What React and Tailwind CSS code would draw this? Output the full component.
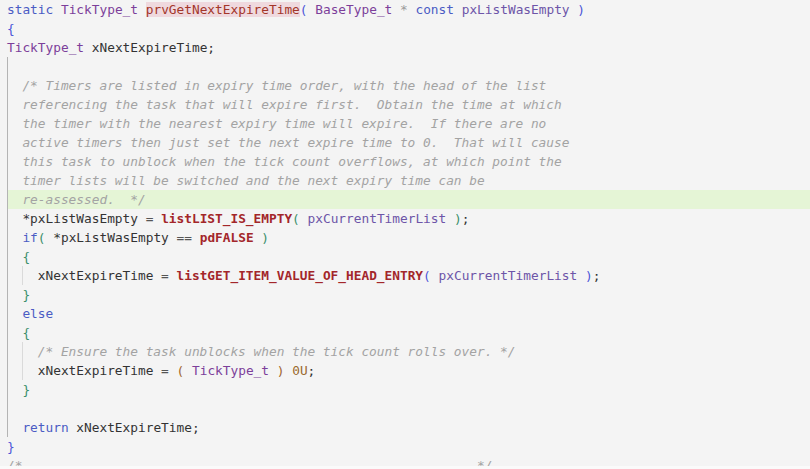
import React from 'react';

// token colours
const C = {
  kw: 'text-[#4b5cc4]',
  type: 'text-[#7c3f9a]',
  mac: 'text-[#a3262a] font-bold',
  param: 'text-[#6d55a8]',
  id: 'text-[#333333]',
  op: 'text-[#555555]',
  dim: 'text-[#9a9a9a]',
  com: 'text-[#a3a3a3] italic',
  b1: 'text-[#4b55d8]',
  b2: 'text-[#3a8f6a]',
  b3: 'text-[#a0652c]',
  num: 'text-[#9a6a2c]',
};

const T = ({ c, children }) => <span className={C[c]}>{children}</span>;

const Line = ({ className = '', children }) => (
  <div className={`h-[19px] whitespace-pre ${className}`}>{children}</div>
);

const comment = [
  '/* Timers are listed in expiry time order, with the head of the list',
  'referencing the task that will expire first.  Obtain the time at which',
  'the timer with the nearest expiry time will expire.  If there are no',
  'active timers then just set the next expire time to 0.  That will cause',
  'this task to unblock when the tick count overflows, at which point the',
  'timer lists will be switched and the next expiry time can be',
];

export default function App() {
  return (
    <div
      className="w-[810px] h-[469px] bg-[#f4f4f4] overflow-hidden flex flex-col text-[12.8px] leading-[19px] text-[#333333]"
      style={{ fontFamily: '"DejaVu Sans Mono", "Liberation Mono", monospace' }}
    >
      <div className="h-[466px] overflow-hidden">
        <div className="pl-[7px]">
          <Line>
            <T c="kw">static</T> <T c="type">TickType_t</T>{' '}
            <span className="bg-[#efd9de] text-[#a3362a] font-medium">prvGetNextExpireTime</span>
            <T c="b1">(</T> <T c="type">BaseType_t</T> <T c="dim">*</T> <T c="kw">const</T>{' '}
            <T c="param">pxListWasEmpty</T> <T c="b1">)</T>
          </Line>
          <Line><T c="b1">{'{'}</T></Line>
          <Line>
            <T c="type">TickType_t</T> <T c="id">xNextExpireTime;</T>
          </Line>
        </div>

        {/* function body with indent guide */}
        <div className="ml-[7px] border-l border-[#b4b4b4]">
          <Line />
          {comment.map((t) => (
            <Line key={t} className="pl-[14.4px]"><T c="com">{t}</T></Line>
          ))}
          <Line className="pl-[14.4px] bg-[#e5f5d6]"><T c="com">{'re-assessed.  */'}</T></Line>
          <Line className="pl-[14.4px]">
            <T c="id">*pxListWasEmpty</T> <T c="op">=</T> <T c="mac">listLIST_IS_EMPTY</T>
            <T c="b2">(</T> <T c="param">pxCurrentTimerList</T> <T c="b2">)</T><T c="id">;</T>
          </Line>
          <Line className="pl-[14.4px]">
            <T c="kw">if</T><T c="b2">(</T> <T c="id">*pxListWasEmpty</T> <T c="op">==</T>{' '}
            <T c="mac">pdFALSE</T> <T c="b2">)</T>
          </Line>
          <Line className="pl-[14.4px]"><T c="b2">{'{'}</T></Line>
          <div className="ml-[14px] border-l border-[#dadada]">
            <Line className="pl-[14.8px]">
              <T c="id">xNextExpireTime</T> <T c="op">=</T>{' '}
              <T c="mac">listGET_ITEM_VALUE_OF_HEAD_ENTRY</T>
              <T c="b1">(</T> <T c="param">pxCurrentTimerList</T> <T c="b1">)</T><T c="id">;</T>
            </Line>
          </div>
          <Line className="pl-[14.4px]"><T c="b2">{'}'}</T></Line>
          <Line className="pl-[14.4px]"><T c="kw">else</T></Line>
          <Line className="pl-[14.4px]"><T c="b2">{'{'}</T></Line>
          <div className="ml-[14px] border-l border-[#dadada]">
            <Line className="pl-[14.8px]">
              <T c="com">{'/* Ensure the task unblocks when the tick count rolls over. */'}</T>
            </Line>
            <Line className="pl-[14.8px]">
              <T c="id">xNextExpireTime</T> <T c="op">=</T> <T c="b3">(</T>{' '}
              <T c="type">TickType_t</T> <T c="b3">)</T> <T c="num">0U</T><T c="id">;</T>
            </Line>
          </div>
          <Line className="pl-[14.4px]"><T c="b2">{'}'}</T></Line>
          <Line />
          <Line className="pl-[14.4px]">
            <T c="kw">return</T> <T c="id">xNextExpireTime;</T>
          </Line>
        </div>

        <div className="pl-[7px]">
          <Line><T c="b1">{'}'}</T></Line>
          <Line>
            <T c="com">{'/*' + ' '.repeat(59) + '*/'}</T>
          </Line>
        </div>
      </div>
      <div className="flex-1 bg-[#fafafa]" />
    </div>
  );
}
